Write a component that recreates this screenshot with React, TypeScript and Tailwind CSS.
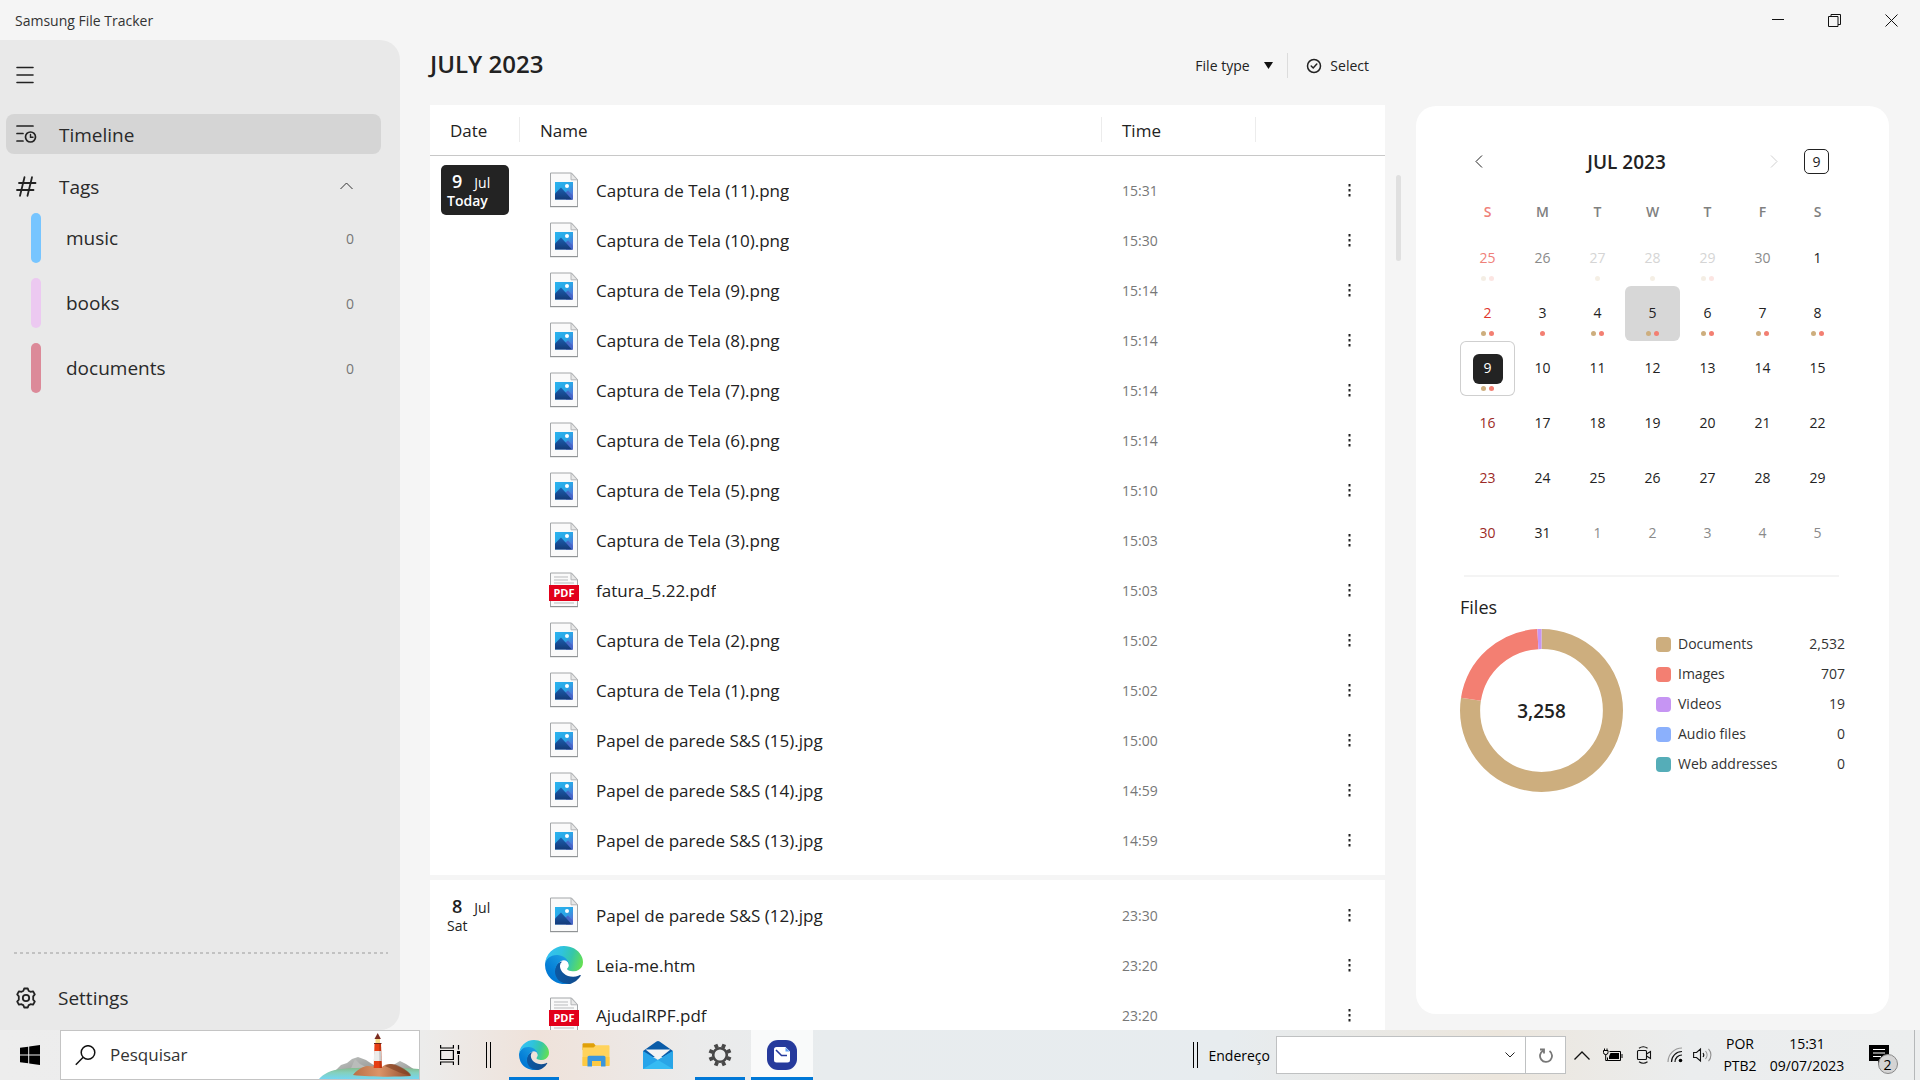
import React, { useId } from 'react';

type FileKind = 'image' | 'pdf' | 'web';
type FileEntry = { name: string; time: string; kind: FileKind };
type Group = { day: string; month: string; label: string; today: boolean; files: FileEntry[] };

const img = (name: string, time: string): FileEntry => ({ name, time, kind: 'image' });
const pdf = (name: string, time: string): FileEntry => ({ name, time, kind: 'pdf' });

const GROUPS: Group[] = [
  {
    day: '9',
    month: 'Jul',
    label: 'Today',
    today: true,
    files: [
      img('Captura de Tela (11).png', '15:31'),
      img('Captura de Tela (10).png', '15:30'),
      img('Captura de Tela (9).png', '15:14'),
      img('Captura de Tela (8).png', '15:14'),
      img('Captura de Tela (7).png', '15:14'),
      img('Captura de Tela (6).png', '15:14'),
      img('Captura de Tela (5).png', '15:10'),
      img('Captura de Tela (3).png', '15:03'),
      pdf('fatura_5.22.pdf', '15:03'),
      img('Captura de Tela (2).png', '15:02'),
      img('Captura de Tela (1).png', '15:02'),
      img('Papel de parede S&S (15).jpg', '15:00'),
      img('Papel de parede S&S (14).jpg', '14:59'),
      img('Papel de parede S&S (13).jpg', '14:59'),
    ],
  },
  {
    day: '8',
    month: 'Jul',
    label: 'Sat',
    today: false,
    files: [
      img('Papel de parede S&S (12).jpg', '23:30'),
      { name: 'Leia-me.htm', time: '23:20', kind: 'web' },
      pdf('AjudaIRPF.pdf', '23:20'),
    ],
  },
];

const TAGS = [
  { name: 'music', count: 0, bar: 'bg-[#77c5ff]' },
  { name: 'books', count: 0, bar: 'bg-[#ecc9f1]' },
  { name: 'documents', count: 0, bar: 'bg-[#dc8a99]' },
];

const LEGEND = [
  { name: 'Documents', value: '2,532', swatch: 'bg-[#cdae7e]' },
  { name: 'Images', value: '707', swatch: 'bg-[#f37f72]' },
  { name: 'Videos', value: '19', swatch: 'bg-[#c695f3]' },
  { name: 'Audio files', value: '0', swatch: 'bg-[#8bb0fc]' },
  { name: 'Web addresses', value: '0', swatch: 'bg-[#55adb8]' },
];

type Mark = 'doc' | 'img';
type Day = { n: number; tone: string; marks?: Mark[]; state?: 'hover' | 'today'; faded?: boolean };

const INK = 'text-[#222]';
const OUT = 'text-[#8a8a8a]';
const FAINT = 'text-[#d5d5d5]';
const SUN = 'text-[#9c2a26]';
const both: Mark[] = ['doc', 'img'];
const range = (from: number): Day[] => [
  { n: from, tone: SUN },
  ...[1, 2, 3, 4, 5, 6].map((i) => ({ n: from + i, tone: INK })),
];

const WEEKS: Day[][] = [
  [
    { n: 25, tone: 'text-[#ef8079]', marks: both, faded: true },
    { n: 26, tone: OUT },
    { n: 27, tone: FAINT, marks: ['doc'], faded: true },
    { n: 28, tone: FAINT, marks: ['doc'], faded: true },
    { n: 29, tone: FAINT, marks: both, faded: true },
    { n: 30, tone: OUT },
    { n: 1, tone: INK },
  ],
  [
    { n: 2, tone: 'text-[#e0342b]', marks: both },
    { n: 3, tone: INK, marks: ['img'] },
    { n: 4, tone: INK, marks: both },
    { n: 5, tone: INK, marks: both, state: 'hover' },
    { n: 6, tone: INK, marks: both },
    { n: 7, tone: INK, marks: both },
    { n: 8, tone: INK, marks: both },
  ],
  [{ n: 9, tone: 'text-white', marks: both, state: 'today' }, ...range(9).slice(1)],
  range(16),
  range(23),
  [
    { n: 30, tone: SUN },
    { n: 31, tone: INK },
    ...[1, 2, 3, 4, 5].map((n) => ({ n, tone: OUT })),
  ],
];

function EdgeLogo({ className }: { className: string }) {
  const id = useId();
  return (
    <svg viewBox="0 0 256 256" className={className} aria-hidden="true">
      <defs>
        <linearGradient id={id + 'a'} x1="63" y1="177" x2="241" y2="177" gradientUnits="userSpaceOnUse">
          <stop offset="0" stopColor="#0c59a4" />
          <stop offset="1" stopColor="#114a8b" />
        </linearGradient>
        <linearGradient id={id + 'b'} x1="157" y1="97" x2="46" y2="223" gradientUnits="userSpaceOnUse">
          <stop offset="0" stopColor="#1b9de2" />
          <stop offset="0.2" stopColor="#1595df" />
          <stop offset="0.7" stopColor="#0680d7" />
          <stop offset="1" stopColor="#0078d4" />
        </linearGradient>
        <linearGradient id={id + 'c'} x1="20" y1="60" x2="250" y2="130" gradientUnits="userSpaceOnUse">
          <stop offset="0" stopColor="#35c1f1" />
          <stop offset="0.35" stopColor="#2fc3dd" />
          <stop offset="0.65" stopColor="#36c7a8" />
          <stop offset="1" stopColor="#66e050" />
        </linearGradient>
      </defs>
      <path
        fill={`url(#${id}a)`}
        d="M235.7 195.5a93.7 93.7 0 01-10.6 4.7 101.9 101.9 0 01-35.9 6.4c-47.3 0-88.5-32.5-88.5-74.3a31.5 31.5 0 0116.4-27.3c-42.8 1.8-53.8 46.4-53.8 72.5 0 74 68.1 81.4 82.8 81.4 7.9 0 19.8-2.3 27-4.6l1.3-.4a128.3 128.3 0 0066.6-52.8 4 4 0 00-5.3-5.6z"
      />
      <path
        fill={`url(#${id}b)`}
        d="M105.7 241.4a79.2 79.2 0 01-22.7-21.3 80.7 80.7 0 0129.5-120c3.2-1.5 8.5-4.1 15.6-4a32.4 32.4 0 0125.7 13 31.9 31.9 0 016.3 18.7c0-.2 24.5-79.6-80-79.6-43.9 0-80 41.7-80 78.2a130.2 130.2 0 0012.1 56 128 128 0 00156.4 67 75.5 75.5 0 01-62.8-8z"
      />
      <path
        fill={`url(#${id}c)`}
        d="M152.3 148.9c-.9 1-3.4 2.5-3.4 5.6 0 2.6 1.7 5.2 4.8 7.3 14.3 10 41.4 8.6 41.5 8.6a59.6 59.6 0 0030.3-8.3 61.4 61.4 0 0030.4-52.9c.3-22.4-8-37.3-11.3-43.9C223.5 23.9 177.7 0 128 0A128 128 0 000 126.2c.5-36.5 36.8-66 80-66 3.5 0 23.5.3 42 10.1 16.3 8.6 24.9 19 30.8 29.2 6.2 10.7 7.3 24.1 7.3 29.5 0 5.3-2.7 13.3-7.8 19.9z"
      />
    </svg>
  );
}

function PageOutline() {
  return (
    <>
      <path d="M5.500 2h21l6 6.500v27h-27z" fill="#fafafa" stroke="#a3a6a8" />
      <path d="M26 2v6.800h6.500z" fill="#e8e8e8" stroke="#b4b6b8" />
      <path d="M5 35.700h28" stroke="#8c8f91" />
    </>
  );
}

function ImageFileIcon() {
  const id = useId();
  return (
    <svg viewBox="0 0 38 38" className="size-[38px]" aria-hidden="true">
      <defs>
        <linearGradient id={id + 's'} x1="0" y1="0" x2="1" y2="1">
          <stop offset="0" stopColor="#2ab4ee" />
          <stop offset="0.5" stopColor="#2aa5e6" />
          <stop offset="1" stopColor="#6a5fd0" />
        </linearGradient>
        <linearGradient id={id + 'm'} x1="0" y1="0" x2="0" y2="1">
          <stop offset="0" stopColor="#1a5fb0" />
          <stop offset="1" stopColor="#143a78" />
        </linearGradient>
      </defs>
      <PageOutline />
      <path d="M10 11h18v17.500H10z" fill={`url(#${id}s)`} />
      <path d="M20 22l3-2.500 5 5.500v3.500h-7z" fill="#4767c8" />
      <path d="M10 22.500l6-6L27 28.500H10z" fill={`url(#${id}m)`} />
      <circle cx="22" cy="15" r="2" fill="#fff" />
    </svg>
  );
}

function PdfFileIcon() {
  return (
    <svg viewBox="0 0 38 38" className="size-[38px]" aria-hidden="true">
      <PageOutline />
      <path d="M9 6h14M9 9h14M9 12h20M9 32h20" stroke="#b9bbbd" />
      <path d="M4 14h30v16H4z" fill="#e2001a" />
      <text x="19" y="26" textAnchor="middle" fontSize="11" fontWeight="700" fill="#fff">
        PDF
      </text>
    </svg>
  );
}

function FileIcon({ kind }: { kind: FileKind }) {
  if (kind === 'image') return <ImageFileIcon />;
  if (kind === 'pdf') return <PdfFileIcon />;
  return <EdgeLogo className="size-[38px]" />;
}

function TitleBar() {
  return (
    <header className="flex h-10 items-stretch justify-between">
      <h1 className="self-center pl-[15px] text-[14px] text-[#333]">Samsung File Tracker</h1>
      <div className="flex">
        <button aria-label="Minimize" className="flex w-[57px] items-center justify-center">
          <svg viewBox="0 0 12 12" className="size-3" stroke="#111" fill="none">
            <path d="M0 5.500h12" />
          </svg>
        </button>
        <button aria-label="Restore" className="flex w-[57px] items-center justify-center">
          <svg viewBox="0 0 13 13" className="size-[13px]" stroke="#111" fill="none">
            <path d="M.5 2.500h9.500v10H.5zM3 2.500V.5h9.500v10H10" />
          </svg>
        </button>
        <button aria-label="Close" className="flex w-[57px] items-center justify-center">
          <svg viewBox="0 0 13 13" className="size-[13px]" stroke="#111" fill="none">
            <path d="M.5.5l12 12M12.500.5l-12 12" />
          </svg>
        </button>
      </div>
    </header>
  );
}

function GearOutline() {
  return (
    <svg viewBox="0 0 24 24" className="size-6" fill="none" stroke="#222" strokeWidth="1.800" strokeLinejoin="round">
      <circle cx="12" cy="12" r="3.200" />
      <path d="M10.200 2.500h3.600l.8 2.300c.7.200 1.300.6 1.900 1l2.500-.5 1.800 3.100-1.600 1.900v3.400l1.600 1.900-1.800 3.100-2.500-.5c-.6.400-1.200.8-1.900 1l-.8 2.300h-3.600l-.8-2.300c-.7-.2-1.300-.6-1.900-1l-2.500.5-1.800-3.100 1.600-1.900v-3.400L3.200 8.400 5 5.300l2.500.5c.6-.4 1.200-.8 1.900-1z" />
    </svg>
  );
}

function Sidebar() {
  return (
    <nav className="flex w-[400px] shrink-0 flex-col rounded-r-[20px] bg-[#e9e9e9] text-[19px] text-[#2a2a2a]">
      <button aria-label="Menu" className="mt-[15px] ml-1.5 flex h-10 w-10 items-center pl-2.5">
        <svg viewBox="0 0 18 18" className="size-[18px]" stroke="#222" strokeWidth="1.600" strokeLinecap="round">
          <path d="M1 1.500h16M1 9h16M1 16.500h16" />
        </svg>
      </button>
      <button className="mt-[19px] mr-[19px] ml-1.5 flex h-10 items-center gap-[22px] rounded-lg bg-[#d5d5d5] pl-2.5 text-left">
        <svg viewBox="0 0 21 21" className="size-[21px]" fill="none" stroke="#222" strokeWidth="1.700" strokeLinecap="round">
          <path d="M1 2h16M1 9.500h6M1 17h6" />
          <circle cx="14.500" cy="13" r="5" />
          <path d="M14.500 10.500V13.200H17" strokeWidth="1.400" />
        </svg>
        <span className="pt-0.5">Timeline</span>
      </button>
      <button className="mt-3 mr-[19px] ml-1.5 flex h-10 items-center gap-[22px] pr-7 pl-2.5 text-left">
        <svg viewBox="0 0 21 21" className="size-[21px]" fill="none" stroke="#222" strokeWidth="1.800" strokeLinecap="round">
          <path d="M8.500 1.200l-4.500 18.600M16 1.200l-4.500 18.600M3 7h16.500M1 14h16.500" />
        </svg>
        <span className="flex-1 pt-0.5">Tags</span>
        <svg viewBox="0 0 13 8" className="h-2 w-[13px]" fill="none" stroke="#333">
          <path d="M.5 7l6-6 6 6" />
        </svg>
      </button>
      <ul className="mt-[7px] flex flex-col gap-[15px] pr-[46px] pl-[31px]">
        {TAGS.map((t) => (
          <li key={t.name}>
            <button className="flex h-[50px] w-full items-center gap-[25px] text-left">
              <span className={`h-[50px] w-2.5 rounded-full ${t.bar}`} />
              <span className="flex-1">{t.name}</span>
              <span className="text-[14px] text-[#777]">{t.count}</span>
            </button>
          </li>
        ))}
      </ul>
      <div className="mt-auto mr-3 ml-3.5 h-0.5 bg-[repeating-linear-gradient(90deg,#c2c2c2_0_3px,transparent_3px_6px)]" />
      <button className="mt-6 mb-3 ml-1.5 flex h-10 items-center gap-5 pl-2 text-left">
        <GearOutline />
        Settings
      </button>
    </nav>
  );
}

function DateCell({ group }: { group: Group }) {
  return (
    <div
      className={`ml-[11px] flex h-[50px] w-[68px] flex-col justify-center rounded-[5px] pt-0.5 pl-1.5 text-[14px] leading-[18px] ${
        group.today ? 'bg-[#232323] text-white' : 'text-[#222]'
      }`}
    >
      <div className="flex items-baseline gap-3 pl-[5px]">
        <span className="text-[18px] font-semibold">{group.day}</span>
        <span>{group.month}</span>
      </div>
      <div className={group.today ? 'font-semibold' : ''}>{group.label}</div>
    </div>
  );
}

function HeadLabel({ children }: { children: React.ReactNode }) {
  return <div className="flex h-[25px] items-center border-r border-[#ececec] pt-0.5 pl-5">{children}</div>;
}

function FileTable() {
  return (
    <table className="w-full table-fixed border-collapse text-left">
      <colgroup>
        <col className="w-[90px]" />
        <col />
        <col className="w-[154px]" />
        <col className="w-[129px]" />
      </colgroup>
      <thead>
        <tr className="bg-white text-[17px] text-[#222]">
          <th className="h-[50px] border-b border-[#c8c8c8] p-0 font-normal">
            <HeadLabel>Date</HeadLabel>
          </th>
          <th className="border-b border-[#c8c8c8] p-0 font-normal">
            <HeadLabel>Name</HeadLabel>
          </th>
          <th className="border-b border-[#c8c8c8] p-0 font-normal">
            <HeadLabel>Time</HeadLabel>
          </th>
          <th className="border-b border-[#c8c8c8] p-0" aria-label="Actions" />
        </tr>
      </thead>
      {GROUPS.map((g, gi) => (
        <tbody key={g.day} className="bg-white">
          {gi > 0 && (
            <tr>
              <td colSpan={4} className="h-[5px] bg-[#f5f5f5] p-0" />
            </tr>
          )}
          <tr>
            <td colSpan={4} className="h-2.5 p-0" />
          </tr>
          {g.files.map((f, i) => (
            <tr key={f.name}>
              {i === 0 && (
                <td rowSpan={g.files.length} className="p-0 align-top">
                  <DateCell group={g} />
                </td>
              )}
              <td className="h-[50px] p-0">
                <div className="flex items-center gap-[13px] pl-[25px] text-[17px] text-[#222]">
                  <FileIcon kind={f.kind} />
                  <span className="truncate pt-0.5">{f.name}</span>
                </div>
              </td>
              <td className="p-0 pl-5 text-[14px] text-[#777]">{f.time}</td>
              <td className="p-0 pr-[26px] text-right">
                <button aria-label={`More options for ${f.name}`} className="inline-flex h-8 w-5 items-center justify-center align-middle">
                  <svg viewBox="0 0 3 13" className="h-[13px] w-[3px]" fill="#222">
                    <path d="M.5 0h2v2.500h-2zM.5 5h2v2.500h-2zM.5 10h2v2.500h-2z" />
                  </svg>
                </button>
              </td>
            </tr>
          ))}
          <tr>
            <td colSpan={4} className="h-2.5 p-0" />
          </tr>
        </tbody>
      ))}
    </table>
  );
}

function DayCell({ day }: { day: Day }) {
  const frame =
    day.state === 'hover' ? 'bg-[#d7d7d7]' : day.state === 'today' ? 'ring-1 ring-[#cfcfcf] ring-inset' : '';
  return (
    <td className="h-[55px] p-0">
      <button className={`relative flex h-[55px] w-full items-center justify-center rounded-[6px] text-[14px] ${day.tone} ${frame}`}>
        {day.state === 'today' ? (
          <span className="flex size-[30px] items-center justify-center rounded-[6px] bg-[#232323] pb-0.5">{day.n}</span>
        ) : (
          <span className="pb-0.5">{day.n}</span>
        )}
        {day.marks && (
          <span className={`absolute inset-x-0 bottom-[5px] flex justify-center gap-[3px] ${day.faded ? 'opacity-20' : ''}`}>
            {day.marks.map((m) => (
              <span key={m} className={`size-[5px] rounded-full ${m === 'doc' ? 'bg-[#cdae7e]' : 'bg-[#f37f72]'}`} />
            ))}
          </span>
        )}
      </button>
    </td>
  );
}

function Calendar() {
  return (
    <section aria-label="Calendar">
      <div className="flex h-[25px] items-center pr-4">
        <button aria-label="Previous month" className="flex w-[38px] items-center justify-center">
          <svg viewBox="0 0 8 13" className="h-[13px] w-2" fill="none" stroke="#222">
            <path d="M7 .5l-6 6 6 6" />
          </svg>
        </button>
        <h2 className="flex-1 pt-0.5 text-center text-[19px] font-semibold text-[#222]">JUL 2023</h2>
        <button aria-label="Next month" className="flex w-[38px] items-center justify-center">
          <svg viewBox="0 0 8 13" className="h-[13px] w-2" fill="none" stroke="#cfcfcf">
            <path d="M1 .5l6 6-6 6" />
          </svg>
        </button>
        <button
          aria-label="Go to today, 9"
          className="ml-[11px] flex size-[25px] items-center justify-center rounded-[5px] border border-[#222] text-[14px] text-[#222]"
        >
          9
        </button>
      </div>
      <table className="mt-[19px] w-full table-fixed border-collapse text-center">
        <thead>
          <tr>
            {['S', 'M', 'T', 'W', 'T', 'F', 'S'].map((d, i) => (
              <th key={i} className={`h-[38px] p-0 pb-0.5 text-[14px] font-semibold ${i === 0 ? 'text-[#ef8079]' : 'text-[#808080]'}`}>
                {d}
              </th>
            ))}
          </tr>
        </thead>
        <tbody>
          {WEEKS.map((w, i) => (
            <tr key={i}>
              {w.map((d) => (
                <DayCell key={d.n} day={d} />
              ))}
            </tr>
          ))}
        </tbody>
      </table>
    </section>
  );
}

function Donut() {
  const parts = [
    { color: '#cdae7e', value: 2532 },
    { color: '#f37f72', value: 707 },
    { color: '#c695f3', value: 27 },
  ];
  const total = 3266;
  let offset = 0;
  return (
    <div className="grid size-[163px] shrink-0 place-items-center">
      <svg viewBox="0 0 162 162" className="col-start-1 row-start-1 size-full -rotate-90" fill="none" aria-hidden="true">
        {parts.map((p) => {
          const len = (p.value / total) * 100;
          const ring = (
            <circle
              key={p.color}
              cx="81"
              cy="81"
              r="71"
              stroke={p.color}
              strokeWidth="20"
              pathLength={100}
              strokeDasharray={`${len} ${100 - len}`}
              strokeDashoffset={-offset}
            />
          );
          offset += len;
          return ring;
        })}
      </svg>
      <span className="col-start-1 row-start-1 pt-0.5 text-[19px] font-semibold text-[#222]">3,258</span>
    </div>
  );
}

function SidePanel() {
  return (
    <aside className="mt-[66px] mr-[31px] mb-4 flex w-[473px] shrink-0 flex-col rounded-[20px] bg-white pt-[43px] pr-11 pl-11">
      <Calendar />
      <hr className="mt-3.5 mr-1.5 ml-1 border-t-2 border-[#f4f4f4]" />
      <section aria-label="Files">
        <h2 className="mt-[15px] text-[18px] leading-[30px] text-[#222]">Files</h2>
        <div className="mt-[7px] flex gap-[33px]">
          <Donut />
          <ul className="flex-1 text-[14px] text-[#333]">
            {LEGEND.map((l) => (
              <li key={l.name} className="flex h-[30px] items-center">
                <span className={`mr-[7px] size-[15px] rounded-[4px] ${l.swatch}`} />
                <span className="flex-1 pb-0.5">{l.name}</span>
                <span className="pb-0.5">{l.value}</span>
              </li>
            ))}
          </ul>
        </div>
      </section>
    </aside>
  );
}

function TimelineView() {
  return (
    <main className="ml-[30px] flex min-w-0 flex-1 flex-col">
      <div className="flex h-[65px] shrink-0 items-center justify-between pr-4 pb-4">
        <h2 className="pb-0.5 text-[24px] font-semibold text-[#222]">JULY 2023</h2>
        <div className="flex h-[25px] items-center pt-0.5 text-[14px] text-[#222]">
          <label className="flex items-center gap-3.5">
            <select aria-label="File type" className="appearance-none bg-transparent">
              <option>File type</option>
            </select>
            <svg viewBox="0 0 9 7" className="h-[7px] w-[9px]" fill="#111" aria-hidden="true">
              <path d="M0 0h9L4.500 7z" />
            </svg>
          </label>
          <button className="ml-3.5 flex h-[25px] items-center gap-2 border-l border-[#dcdcdc] pl-[18px]">
            <svg viewBox="0 0 16 16" className="size-4" fill="none" stroke="#222" strokeWidth="1.500" strokeLinecap="round">
              <circle cx="8" cy="8" r="6.500" />
              <path d="M5.200 8l2 2 3.600-4" />
            </svg>
            Select
          </button>
        </div>
      </div>
      <div className="min-h-0 flex-1 overflow-hidden bg-white">
        <FileTable />
      </div>
    </main>
  );
}

function TaskButton({ label, active, running, children }: { label: string; active?: boolean; running?: boolean; children: React.ReactNode }) {
  return (
    <button aria-label={label} className={`relative flex w-[62px] items-center justify-center ${active ? 'bg-[#f9fafa]' : ''}`}>
      {children}
      {(running || active) && <span className={`absolute bottom-0 h-[3px] bg-[#0078d7] ${active ? 'inset-x-0' : 'inset-x-1.5'}`} />}
    </button>
  );
}

function Grip() {
  return <span className="h-[26px] w-[5px] self-center border-x border-black" />;
}

function Lighthouse() {
  const id = useId();
  return (
    <svg viewBox="0 0 100 48" className="h-12 w-[100px] self-end" aria-hidden="true">
      <defs>
        <linearGradient id={id + 'w'} x1="0" y1="0" x2="0" y2="1">
          <stop offset="0" stopColor="#86b98a" />
          <stop offset="0.45" stopColor="#84d0bd" />
          <stop offset="1" stopColor="#74d6f2" />
        </linearGradient>
        <linearGradient id={id + 'r'} x1="0" y1="0" x2="1" y2="0">
          <stop offset="0" stopColor="#b96f46" />
          <stop offset="0.45" stopColor="#dc9468" />
          <stop offset="1" stopColor="#8e4a2a" />
        </linearGradient>
        <linearGradient id={id + 'm'} x1="0" y1="0" x2="1" y2="1">
          <stop offset="0" stopColor="#c4c6c4" />
          <stop offset="1" stopColor="#8c8f8d" />
        </linearGradient>
      </defs>
      <path d="M14 42L22 34l6-2 5-4 6-2 8 3 6 4 7 4v6H14z" fill={`url(#${id}m)`} />
      <path d="M36 28l5 5 6 3 5 6H30z" fill="#b9bcba" />
      <path d="M68 38l8-5 5-3 6 3 9 6v6H68z" fill={`url(#${id}m)`} />
      <path d="M0 48c4-5 12-9 22-10 18-2 50-2 78 0v10z" fill={`url(#${id}w)`} />
      <path d="M34 44c3-4 8-8 14-9 6 0 10 1 15 1 3-3 8-4 13-2 7 3 13 6 16 11-15 1-42 1-58-1z" fill={`url(#${id}r)`} />
      <path d="M66 35c5-3 10-2 14 0 5 3 10 5 12 9-7 0-15-4-26-9z" fill="#7d3d22" opacity=".6" />
      <path d="M55.500 13h6.500l1 24h-8.300z" fill="#e63e12" />
      <path d="M55.200 20h7.100l.4 10h-8z" fill="#ececea" />
      <path d="M60 13h2l1 24h-2.500z" fill="#000" opacity=".15" />
      <path d="M56.500 8h4.500v5h-4.500z" fill="#f6dd8c" />
      <path d="M55.500 8l3.200-6 3.200 6z" fill="#7c2d20" />
      <path d="M55 12.500h7.500" stroke="#6b241a" />
    </svg>
  );
}

function Taskbar() {
  return (
    <footer className="flex h-[50px] shrink-0 items-stretch bg-[linear-gradient(90deg,#ededed_0%,#ececeb_22%,#efe2da_28%,#ebebeb_36%,#e8ecee_43%,#e7ecef_64%,#ece6dd_78%,#ebedee_88%,#eceeee_100%)] text-[14px] text-black">
      <button aria-label="Start" className="flex w-[60px] items-center justify-center">
        <svg viewBox="0 0 20 20" className="size-5" fill="#000">
          <path d="M0 2.800l8.200-1.100v7.800H0zM9.200 1.500L20 0v9.500H9.200zM0 10.500h8.200v7.800L0 17.200zM9.200 10.500H20V20L9.200 18.500z" />
        </svg>
      </button>
      <label className="flex w-[360px] items-stretch border border-[#c4c4c4] bg-white pl-3.5">
        <svg viewBox="0 0 21 21" className="size-[21px] self-center" fill="none" stroke="#111" strokeWidth="1.500">
          <circle cx="13" cy="7.500" r="6.800" />
          <path d="M8.200 12.300L.8 19.700" />
        </svg>
        <input
          type="text"
          aria-label="Pesquisar"
          placeholder="Pesquisar"
          className="ml-3.5 min-w-0 flex-1 text-[17px] outline-none placeholder:text-[#333]"
        />
        <Lighthouse />
      </label>
      <button aria-label="Task view" className="flex w-[60px] items-center justify-center">
        <svg viewBox="0 0 21 20" className="h-5 w-[21px]" fill="none" stroke="#000" strokeWidth="1.200">
          <path d="M.6 0v3h12.800V0M.6 5.500h12.800v9H.6zM.6 20v-3h12.800v3M18.500 0v4.500M18.500 10v10" />
          <path d="M17 6h3v3h-3z" fill="#000" stroke="none" />
        </svg>
      </button>
      <span className="flex w-[23px] pl-1.5">
        <Grip />
      </span>
      <TaskButton label="Microsoft Edge" running>
        <EdgeLogo className="size-[30px]" />
      </TaskButton>
      <TaskButton label="File Explorer">
        <svg viewBox="0 0 28 24" className="h-6 w-7">
          <path d="M.5 1.500C.5.700 1 .3 1.800.3h10L14 3v4H.5z" fill="#e0a008" />
          <path d="M.5 4.500h11L14 2.300h12.500c.6 0 1 .4 1 1V22c0 .6-.4 1-1 1h-25c-.6 0-1-.4-1-1z" fill="#ffd35c" />
          <path d="M.5 14h27v8c0 .6-.4 1-1 1h-25c-.6 0-1-.4-1-1z" fill="#fdc943" />
          <path d="M5.500 23.500v-9c0-1 .7-1.700 1.700-1.700h14.600c1 0 1.700.7 1.700 1.700v9h-4.500V18H10v5.500z" fill="#3a96dd" />
        </svg>
      </TaskButton>
      <TaskButton label="Mail">
        <svg viewBox="0 0 30 28" className="h-7 w-[30px]">
          <path d="M0 10L13.500.6c1-.7 2-.7 3 0L30 10v6H0z" fill="#0a5ca8" />
          <path d="M2.500 8.500h25L15 18.500z" fill="#f4f4f4" />
          <path d="M0 10l15 9 15-9v18H0z" fill="#28a5ea" />
          <path d="M30 10L0 28h30z" fill="#36bbf3" />
          <path d="M15 19l15 9V10z" fill="#1b8fdb" opacity=".5" />
        </svg>
      </TaskButton>
      <TaskButton label="Settings" running>
        <svg viewBox="-12 -12 24 24" className="size-6" fill="none" stroke="#484848">
          <circle r="6.800" strokeWidth="2.600" />
          {[22, 67, 112, 157, 202, 247, 292, 337].map((a) => (
            <path key={a} d="M0-7.500V-11.500" strokeWidth="3.800" transform={`rotate(${a})`} />
          ))}
        </svg>
      </TaskButton>
      <TaskButton label="Samsung File Tracker" active>
        <svg viewBox="0 0 30 30" className="size-[30px]">
          <rect width="30" height="30" rx="11" fill="#263a9c" />
          <path d="M9.500 7h9l4.500 4.500V20a2.500 2.500 0 01-2.500 2.500h-11A2.500 2.500 0 017 20V9.500A2.500 2.500 0 019.500 7z" fill="#fff" />
          <path d="M18.500 7.500l4 4h-4z" fill="#5c9df5" />
          <path d="M9 10l5.500 5.500H20" fill="none" stroke="#263a9c" strokeWidth="1.600" />
        </svg>
      </TaskButton>

      <div className="ml-auto flex items-stretch">
        <Grip />
        <label htmlFor="address" className="mr-1.5 ml-2.5 self-center">
          Endereço
        </label>
        <div className="my-1.5 flex border border-[#bfc1c2] bg-white">
          <input id="address" type="text" className="w-[218px] px-2 outline-none" />
          <button aria-label="Show addresses" className="flex w-[30px] items-center justify-center">
            <svg viewBox="0 0 10 6" className="h-1.5 w-2.5" fill="none" stroke="#222">
              <path d="M.5.5L5 5 9.500.5" />
            </svg>
          </button>
          <button aria-label="Refresh" className="flex w-10 items-center justify-center border-l border-[#bfc1c2]">
            <svg viewBox="0 0 14 15" className="h-[15px] w-3.5" fill="none" stroke="#777" strokeWidth="1.800">
              <path d="M4 2.700A6 6 0 1010.500 3M1 1.500h4v4" />
            </svg>
          </button>
        </div>
        <button aria-label="Show hidden icons" className="flex w-8 items-center justify-center">
          <svg viewBox="0 0 16 9" className="h-[9px] w-4" fill="none" stroke="#111" strokeWidth="1.300">
            <path d="M.5 8.500L8 1l7.500 7.500" />
          </svg>
        </button>
        <button aria-label="Battery" className="flex w-[30px] items-center justify-center">
          <svg viewBox="0 0 20 14" className="h-3.5 w-5" fill="none" stroke="#000">
            <path d="M6.500 3.500h11v9h-13v-3M19 6v4" />
            <path d="M7.500 5H16v6H6V8.500z" fill="#000" stroke="none" />
            <path d="M.5 2.500h4.500v2a2 2 0 01-2 2h-.5a2 2 0 01-2-2zM1.500.5v2M4 .5v2M2.700 6.500v6h2" />
          </svg>
        </button>
        <button aria-label="Camera" className="flex w-8 items-center justify-center">
          <svg viewBox="0 0 16 18" className="h-[18px] w-4" fill="none" stroke="#111" strokeWidth="1.100">
            <rect x="1.500" y="4.500" width="9" height="9" rx="1" />
            <path d="M10.500 8l4-2.500v7l-4-2.500M3 2.200C5.500.5 9 .5 11.500 2.200M3 15.800c2.500 1.700 6 1.700 8.500 0" />
          </svg>
        </button>
        <button aria-label="Wi-Fi" className="flex w-[29px] items-center justify-center">
          <svg viewBox="0 0 16 16" className="size-4" fill="none" stroke="#111" strokeWidth="1.200">
            <path d="M1 15C1 7.300 7.300 1 15 1" stroke="#999" />
            <path d="M4.500 15C4.500 9.200 9.200 4.500 15 4.500M8 15c0-3.900 3.100-7 7-7" />
            <circle cx="13.500" cy="13.500" r="1.800" fill="#000" stroke="none" />
          </svg>
        </button>
        <button aria-label="Volume" className="flex w-7 items-center justify-center">
          <svg viewBox="0 0 20 16" className="h-4 w-5" fill="none" stroke="#111" strokeWidth="1.100">
            <path d="M.6 5.500h2.900L7.500 2v12L3.500 10.500H.6zM10 6c1 1.200 1 2.800 0 4" />
            <path d="M12.500 4c2 2.300 2 5.700 0 8M15.500 1.800c3.200 3.500 3.200 8.900 0 12.400" stroke="#8f8f8f" />
          </svg>
        </button>
        <button className="flex w-[46px] flex-col justify-center text-center leading-[22px]">
          <span>POR</span>
          <span>PTB2</span>
        </button>
        <button className="flex w-[88px] flex-col justify-center text-center leading-[22px]">
          <span>15:31</span>
          <span>09/07/2023</span>
        </button>
        <button aria-label="Notifications, 2 new" className="flex w-[64px] items-center justify-center border-r border-[#b5b8b9] pr-2">
          <span className="relative">
            <svg viewBox="0 0 20 20" className="size-5">
              <path d="M0 0h20v16H13l-4 4v-4H0z" fill="#000" />
              <path d="M4 4.500h12M4 8h12M4 11.500h8" stroke="#fff" />
            </svg>
            <span className="absolute top-[9px] left-[9px] flex size-5 items-center justify-center rounded-full border border-[#888] bg-[#d4d4d4] text-[14px]">
              2
            </span>
          </span>
        </button>
        <span className="w-[5px]" />
      </div>
    </footer>
  );
}

export default function App() {
  return (
    <div className="flex h-screen flex-col overflow-hidden bg-[#f5f5f5] font-['Open_Sans','Noto_Sans',sans-serif]">
      <TitleBar />
      <div className="flex min-h-0 flex-1">
        <Sidebar />
        <TimelineView />
        <div className="mr-[15px] ml-[11px] w-[5px] shrink-0 pt-[135px]">
          <div className="h-[86px] rounded-full bg-[#e0e0e0]" />
        </div>
        <SidePanel />
      </div>
      <Taskbar />
    </div>
  );
}
